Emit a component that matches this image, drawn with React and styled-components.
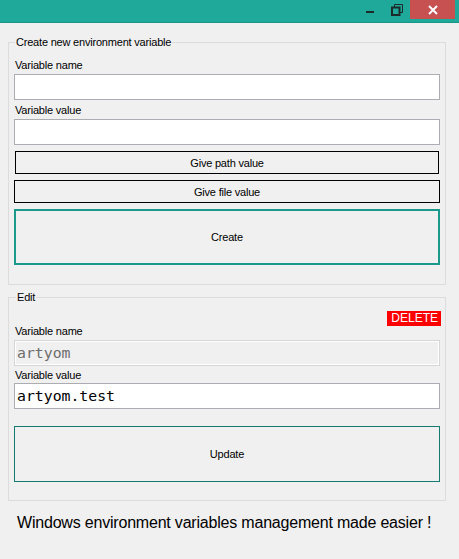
import React from 'react';
import styled, { createGlobalStyle } from 'styled-components';

const GlobalStyle = createGlobalStyle`
    html, body {
        margin: 0;
        padding: 0;
        background: #f0f0f0;
    }
    body {
        font-family: "Liberation Sans", Arial, sans-serif;
        color: #000;
    }
`;

const Window = styled.div`
    width: 459px;
    height: 559px;
    background: #f0f0f0;
    display: flex;
    flex-direction: column;
`;

const TitleBar = styled.div`
    height: 22px;
    background: #1ea99a;
    border-bottom: 1px solid #1a9689;
    display: flex;
    justify-content: flex-end;
    align-items: flex-start;
    padding-right: 4px;
`;

const TitleButton = styled.div`
    width: ${props => props.width || 27}px;
    height: 19px;
    display: flex;
    align-items: center;
    justify-content: center;
    background: ${props => props.close ? '#c75050' : 'transparent'};
`;

const Body = styled.div`
    display: flex;
    flex-direction: column;
    padding: 0 13px 0 8px;
`;

const Group = styled.fieldset`
    margin: ${props => props.top}px 0 0 0;
    padding: 0 5px ${props => props.bottom}px 5px;
    border: 1px solid #dcdcdc;
    min-width: 0;
    display: flex;
    flex-direction: column;
`;

const Legend = styled.legend`
    font-size: 11px;
    letter-spacing: -0.2px;
    line-height: 14px;
    padding: 0 1px;
    margin-left: ${props => props.offset || 1}px;
`;

const Label = styled.div`
    font-size: 11px;
    letter-spacing: -0.2px;
    line-height: 14px;
    margin-top: ${props => props.top || 0}px;
    margin-bottom: ${props => props.bottom || 2}px;
    padding-left: 1px;
`;

const Input = styled.div`
    height: 26px;
    box-sizing: border-box;
    border: 1px solid #abadb3;
    background: ${props => props.disabled ? '#f0f0f0' : '#fff'};
    box-shadow: ${props => props.disabled ? 'inset 0 0 0 1px #fff' : 'none'};
    border-color: ${props => props.disabled ? '#d6d6d6' : '#abadb3'};
    color: ${props => props.disabled ? '#6d6d6d' : '#000'};
    font-family: "DejaVu Sans Mono", "Liberation Mono", monospace;
    font-size: 14.8px;
    line-height: 24px;
    padding-left: 2px;
`;

const Button = styled.div`
    box-sizing: border-box;
    height: ${props => props.tall ? 56 : 23}px;
    margin-top: ${props => props.top || 0}px;
    margin-left: ${props => props.inset || 0}px;
    margin-right: ${props => props.inset || 0}px;
    border: ${props => props.accent ? `${props.accent}px solid ${props.accent > 1 ? '#1b9a8c' : '#157a6f'}` : '1px solid #000'};
    background: #f0f0f0;
    display: flex;
    align-items: center;
    justify-content: center;
    font-size: 11px;
    letter-spacing: -0.2px;
`;

const DeleteRow = styled.div`
    display: flex;
    justify-content: flex-end;
    margin-top: 7px;
    margin-right: -1px;
`;

const DeleteBadge = styled.span`
    background: #ff0000;
    color: #fff;
    font-size: 12px;
    line-height: 15px;
    padding: 0 3px 0 4px;
`;

const Footer = styled.div`
    font-size: 16px;
    letter-spacing: -0.2px;
    line-height: 18px;
    margin-top: 13px;
    padding-left: 9px;
`;

const Minimize = () => (
    <svg width="10" height="10" viewBox="0 0 10 10">
        <rect x="1" y="6" width="8" height="2" fill="#1d2a2a" />
    </svg>
);

const Restore = () => (
    <svg width="12" height="12" viewBox="0 0 12 12">
        <path d="M3.5 3 V0.5 H11.5 V8.5 H9" fill="none" stroke="#1d2a2a" strokeWidth="1" />
        <rect x="1" y="3.5" width="7.5" height="7.5" fill="none" stroke="#1d2a2a" strokeWidth="2" />
    </svg>
);

const Close = () => (
    <svg width="10" height="10" viewBox="0 0 10 10">
        <path d="M1 1 L9 9 M9 1 L1 9" stroke="#fff" strokeWidth="2" />
    </svg>
);

const App = () => {
    return (
        <Window>
            <GlobalStyle />
            <TitleBar>
                <TitleButton><Minimize /></TitleButton>
                <TitleButton width={27}><Restore /></TitleButton>
                <TitleButton close width={45}><Close /></TitleButton>
            </TitleBar>
            <Body>
                <Group top={12} bottom={19}>
                    <Legend offset={1}>Create new environment variable</Legend>
                    <Label top={9}>Variable name</Label>
                    <Input />
                    <Label top={3}>Variable value</Label>
                    <Input />
                    <Button top={6} inset={1}>Give path value</Button>
                    <Button top={6}>Give file value</Button>
                    <Button top={6} tall accent={2}>Create</Button>
                </Group>
                <Group top={5} bottom={18}>
                    <Legend offset={2}>Edit</Legend>
                    <DeleteRow>
                        <DeleteBadge>DELETE</DeleteBadge>
                    </DeleteRow>
                    <Label top={-2}>Variable name</Label>
                    <Input disabled>artyom</Input>
                    <Label top={2} bottom={1}>Variable value</Label>
                    <Input>artyom.test</Input>
                    <Button top={17} tall accent={1}>Update</Button>
                </Group>
                <Footer>Windows environment variables management made easier !</Footer>
            </Body>
        </Window>
    );
};

export default App;
